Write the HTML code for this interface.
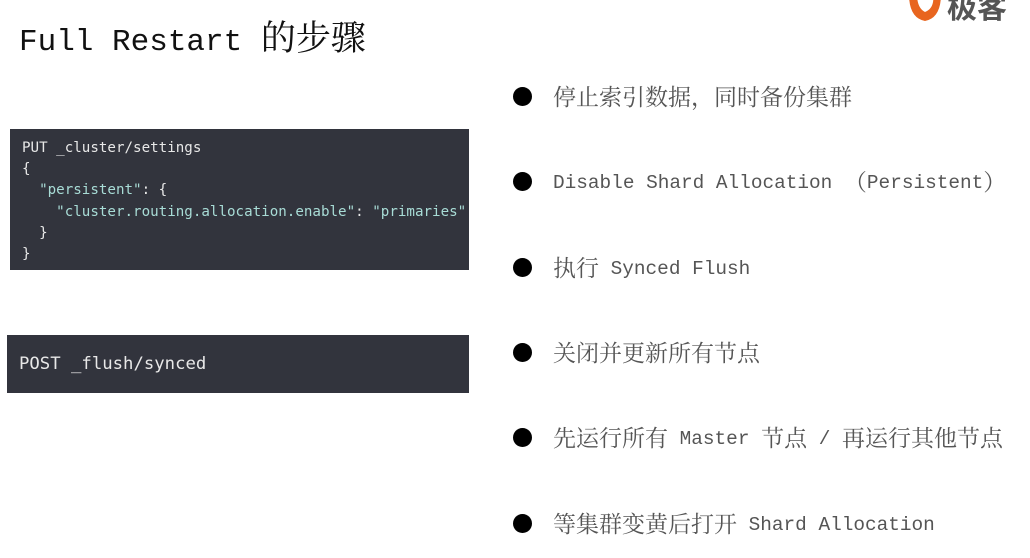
<!DOCTYPE html>
<html><head><meta charset="utf-8"><style>
body{margin:0;width:1030px;height:558px;background:#fff;position:relative;overflow:hidden}
.t{position:absolute;left:19px;top:14px;font-family:"Liberation Mono","Noto Serif CJK SC",monospace;font-size:31px;color:#111;white-space:nowrap;line-height:44px}
.t .c{font-family:"Noto Serif CJK SC",serif;font-size:35px}
.code{position:absolute;background:#32343d;color:#e8e8e8;font-family:"DejaVu Sans Mono",monospace;white-space:pre}
.code .s{color:#a8dcd6}
.b{position:absolute;left:0;font-family:"Noto Serif CJK SC","Noto Sans CJK SC",serif;font-size:23px;color:#555;white-space:nowrap;line-height:30px}
.b .d{position:absolute;left:513px;top:6px;width:19px;height:19px;border-radius:50%;background:#000}
.b .x{position:absolute;left:553px;top:0}
.m{font-family:"Liberation Mono",monospace;font-size:19.4px;position:relative;top:-2px}
</style></head><body>
<div class="t">Full Restart <span class="c">的步骤</span></div>
<svg style="position:absolute;left:905px;top:-12px" width="125" height="36" viewBox="0 0 125 36">
<path d="M4 6 Q4 30 20 33 Q36 30 36 6 L28 6 Q30 20 20 24 Q12 20 12 6Z" fill="#e8651f"/>
<text x="42" y="30" font-family="Noto Sans CJK SC,sans-serif" font-size="30" font-weight="bold" fill="#555">极客</text>
</svg>
<div class="code" style="left:10px;top:129px;width:459px;height:141px;font-size:14.2px;line-height:21.2px;padding:0;"><div style="position:absolute;left:12px;top:9px">PUT _cluster/settings
{
  <span class="s">"persistent"</span>: {
    <span class="s">"cluster.routing.allocation.enable"</span>: <span class="s">"primaries"</span>
  }
}</div></div>
<div class="code" style="left:7px;top:335px;width:462px;height:58px;font-size:17.3px;line-height:58px"><span style="position:absolute;left:12px;top:0px">POST _flush/synced</span></div>
<div class="b" style="top:81px"><span class="d"></span><span class="x">停止索引数据，同时备份集群</span></div>
<div class="b" style="top:166px"><span class="d"></span><span class="x"><span class="m">Disable Shard Allocation </span>（<span class="m">Persistent</span>）</span></div>
<div class="b" style="top:252px"><span class="d"></span><span class="x">执行<span class="m"> Synced Flush</span></span></div>
<div class="b" style="top:337px"><span class="d"></span><span class="x">关闭并更新所有节点</span></div>
<div class="b" style="top:422px"><span class="d"></span><span class="x">先运行所有<span class="m"> Master </span>节点<span class="m"> / </span>再运行其他节点</span></div>
<div class="b" style="top:508px"><span class="d"></span><span class="x">等集群变黄后打开<span class="m"> Shard Allocation</span></span></div>
</body></html>
